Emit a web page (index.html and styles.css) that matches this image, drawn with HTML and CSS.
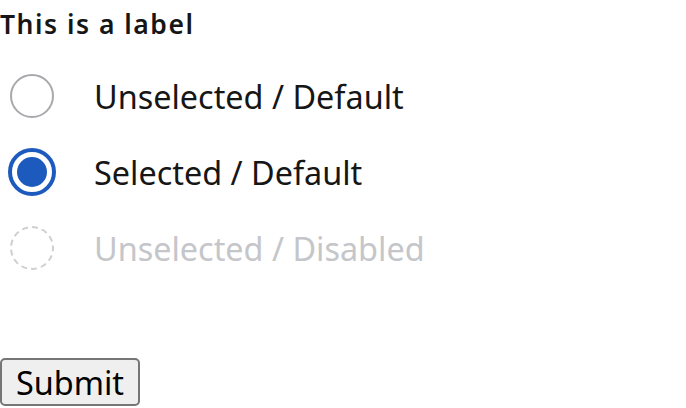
FILE: index.html
```html
<!DOCTYPE html>
<html>
<head>
<meta charset="utf-8">
<link rel="stylesheet" href="styles.css">
</head>
<body>
<form class="form">
  <fieldset class="group">
    <legend class="label">This is a label</legend>
    <label class="option">
      <span class="radio"></span>
      <span class="text">Unselected / Default</span>
    </label>
    <label class="option">
      <span class="radio radio-checked"></span>
      <span class="text">Selected / Default</span>
    </label>
    <label class="option option-disabled">
      <span class="radio radio-disabled"></span>
      <span class="text">Unselected / Disabled</span>
    </label>
  </fieldset>
  <button type="button" class="submit">Submit</button>
</form>
</body>
</html>
```
FILE: styles.css
```css
html, body {
  margin: 0;
  padding: 0;
  background: #ffffff;
}
body {
  font-family: "Noto Sans", "Open Sans", sans-serif;
  color: #161616;
}
.form {
  display: flex;
  flex-direction: column;
  align-items: flex-start;
}
.group {
  border: 0;
  margin: 0;
  padding: 0;
  display: flex;
  flex-direction: column;
}
.label {
  padding: 0;
  font-size: 26.5px;
  font-weight: 600;
  letter-spacing: 1.5px;
  line-height: 48px;
  margin-top: -1px;
  margin-bottom: 10px;
  color: #161616;
}
.option {
  display: flex;
  align-items: center;
  height: 76px;
  padding-left: 10px;
  gap: 40px;
}
.text {
  font-size: 32.4px;
  line-height: 44px;
  color: #161616;
}
.radio {
  width: 44px;
  height: 44px;
  box-sizing: border-box;
  border: 2px solid #a8a8ad;
  border-radius: 50%;
  flex: none;
  display: flex;
  align-items: center;
  justify-content: center;
}
.radio-checked {
  width: 48px;
  height: 48px;
  margin: 0 -2px;
  border: 4px solid #1c5bbd;
}
.radio-checked::after {
  content: "";
  width: 30px;
  height: 30px;
  border-radius: 50%;
  background: #1c5bbd;
}
.radio-disabled {
  border: 2px dashed #cfcfd2;
}
.option-disabled .text {
  color: #c4c6ca;
}
.submit {
  margin-top: 72px;
  font-family: "Noto Sans", "Open Sans", sans-serif;
  font-size: 32.4px;
  line-height: 42px;
  padding: 1px 14px;
  border: 2px solid #767676;
  border-radius: 5px;
  background: #efefef;
  color: #000000;
}
```
